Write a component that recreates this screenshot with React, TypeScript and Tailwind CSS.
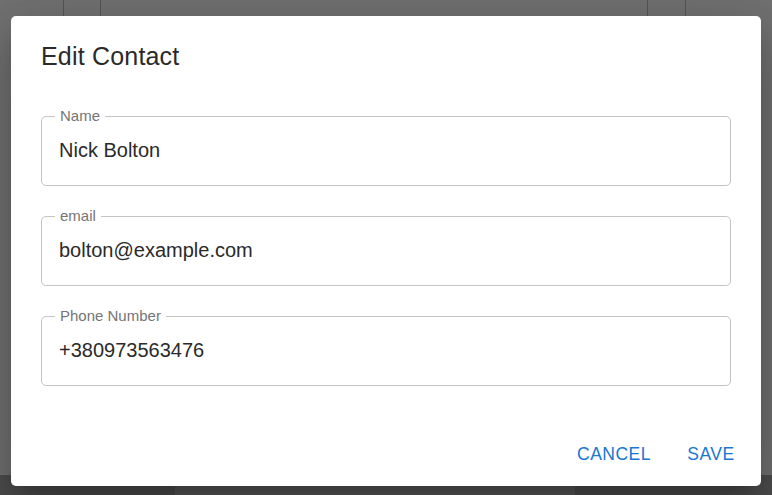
import React from "react";

function Field({ label, value }: { label: string; value: string }) {
  return (
    <div className="relative h-[70px] rounded-[5px] border border-[#c4c4c4]">
      <span className="absolute left-[13px] top-[-11px] bg-white px-[5px] text-[15px] leading-[20px] text-[#757575]">
        {label}
      </span>
      <div className="px-[17px] pt-[19px] text-[20px] leading-[29px] text-[#2a2a2a]">{value}</div>
    </div>
  );
}

export default function App() {
  return (
    <div
      className="relative w-[772px] h-[495px] overflow-hidden bg-[#717171]"
      style={{ fontFamily: '"Liberation Sans", Arial, sans-serif' }}
    >
      <div className="absolute inset-0 flex flex-col">
        <div className="flex h-[20px]">
          <div className="w-[63px]" />
          <div className="w-[38px] border-x border-[#555555]" />
          <div className="w-[546px]" />
          <div className="w-[39px] border-x border-[#555555]" />
          <div className="flex-1" />
        </div>
        <div className="flex-1" />
        <div className="flex h-[20px]">
          <div className="w-[175px] bg-[#4d4d4d]" />
          <div className="w-[400px] bg-[#575757]" />
          <div className="flex-1 bg-[#4d4d4d]" />
        </div>
      </div>
      <div className="relative flex justify-center pt-[16px]">
        <div className="flex w-[750px] flex-col rounded-[5px] bg-white shadow-[0_14px_19px_-9px_rgba(0,0,0,0.2),0_30px_48px_4px_rgba(0,0,0,0.14),0_11px_58px_10px_rgba(0,0,0,0.12)]">
          <div className="px-[30px] py-[20px] text-[25px] leading-[40px] tracking-[0.0075em] text-[#2a2a2a]">
            Edit Contact
          </div>
          <div className="flex flex-col gap-[30px] px-[30px] pt-[20px] pb-[35px]">
            <Field label="Name" value="Nick Bolton" />
            <Field label="email" value="bolton@example.com" />
            <Field label="Phone Number" value="+380973563476" />
          </div>
          <div className="flex justify-end gap-[10px] p-[10px]">
            <button className="min-w-[80px] px-[10px] py-[7.5px] text-[17.5px] leading-[30px] tracking-[0.02857em] text-[#1976d2]">
              CANCEL
            </button>
            <button className="min-w-[80px] px-[10px] py-[7.5px] text-[17.5px] leading-[30px] tracking-[0.02857em] text-[#1976d2]">
              SAVE
            </button>
          </div>
        </div>
      </div>
    </div>
  );
}
